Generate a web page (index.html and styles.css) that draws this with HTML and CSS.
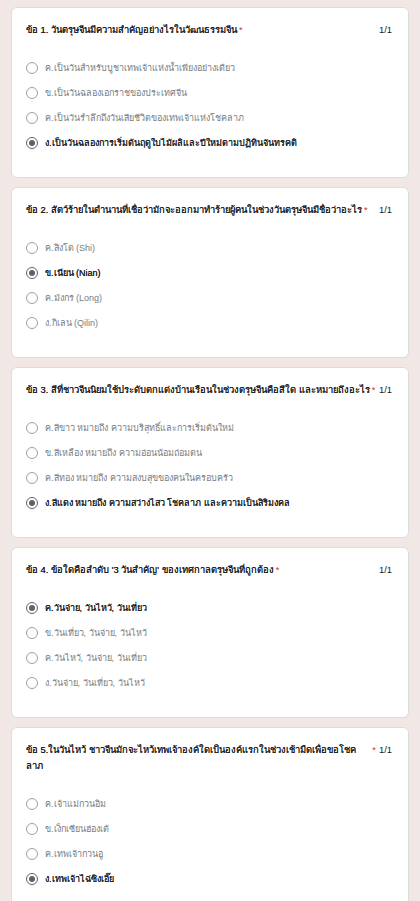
FILE: index.html
```html
<!DOCTYPE html>
<html lang="th">
<head>
<meta charset="utf-8">
<title>แบบทดสอบตรุษจีน</title>
<link rel="stylesheet" href="styles.css">
</head>
<body>
<main class="form">
  <section class="card">
    <div class="q-head">
      <span class="q-title">ข้อ 1. วันตรุษจีนมีความสำคัญอย่างไรในวัฒนธรรมจีน</span><span class="req">*</span>
      <span class="score">1/1</span>
    </div>
    <ul class="options">
      <li class="opt"><span class="radio"></span><span class="label">ค.เป็นวันสำหรับบูชาเทพเจ้าแห่งน้ำเพียงอย่างเดียว</span></li>
      <li class="opt"><span class="radio"></span><span class="label">ข.เป็นวันฉลองเอกราชของประเทศจีน</span></li>
      <li class="opt"><span class="radio"></span><span class="label">ค.เป็นวันรำลึกถึงวันเสียชีวิตของเทพเจ้าแห่งโชคลาภ</span></li>
      <li class="opt selected"><span class="radio"></span><span class="label">ง.เป็นวันฉลองการเริ่มต้นฤดูใบไม้ผลิและปีใหม่ตามปฏิทินจันทรคติ</span></li>
    </ul>
  </section>

  <section class="card">
    <div class="q-head">
      <span class="q-title">ข้อ 2. สัตว์ร้ายในตำนานที่เชื่อว่ามักจะออกมาทำร้ายผู้คนในช่วงวันตรุษจีนมีชื่อว่าอะไร</span><span class="req">*</span>
      <span class="score">1/1</span>
    </div>
    <ul class="options">
      <li class="opt"><span class="radio"></span><span class="label">ค.สิงโต (Shi)</span></li>
      <li class="opt selected"><span class="radio"></span><span class="label">ข.เนียน (Nian)</span></li>
      <li class="opt"><span class="radio"></span><span class="label">ค.มังกร (Long)</span></li>
      <li class="opt"><span class="radio"></span><span class="label">ง.กิเลน (Qilin)</span></li>
    </ul>
  </section>

  <section class="card">
    <div class="q-head">
      <span class="q-title">ข้อ 3. สีที่ชาวจีนนิยมใช้ประดับตกแต่งบ้านเรือนในช่วงตรุษจีนคือสีใด และหมายถึงอะไร</span><span class="req">*</span>
      <span class="score">1/1</span>
    </div>
    <ul class="options">
      <li class="opt"><span class="radio"></span><span class="label">ค.สีขาว หมายถึง ความบริสุทธิ์และการเริ่มต้นใหม่</span></li>
      <li class="opt"><span class="radio"></span><span class="label">ข.สีเหลือง หมายถึง ความอ่อนน้อมถ่อมตน</span></li>
      <li class="opt"><span class="radio"></span><span class="label">ค.สีทอง หมายถึง ความสงบสุขของคนในครอบครัว</span></li>
      <li class="opt selected"><span class="radio"></span><span class="label">ง.สีแดง หมายถึง ความสว่างไสว โชคลาภ และความเป็นสิริมงคล</span></li>
    </ul>
  </section>

  <section class="card">
    <div class="q-head">
      <span class="q-title">ข้อ 4. ข้อใดคือลำดับ '3 วันสำคัญ' ของเทศกาลตรุษจีนที่ถูกต้อง</span><span class="req">*</span>
      <span class="score">1/1</span>
    </div>
    <ul class="options">
      <li class="opt selected"><span class="radio"></span><span class="label">ค.วันจ่าย, วันไหว้, วันเที่ยว</span></li>
      <li class="opt"><span class="radio"></span><span class="label">ข.วันเที่ยว, วันจ่าย, วันไหว้</span></li>
      <li class="opt"><span class="radio"></span><span class="label">ค.วันไหว้, วันจ่าย, วันเที่ยว</span></li>
      <li class="opt"><span class="radio"></span><span class="label">ง.วันจ่าย, วันเที่ยว, วันไหว้</span></li>
    </ul>
  </section>

  <section class="card">
    <div class="q-head">
      <span class="q-title">ข้อ 5.ในวันไหว้ ชาวจีนมักจะไหว้เทพเจ้าองค์ใดเป็นองค์แรกในช่วงเช้ามืดเพื่อขอโชคลาภ</span><span class="req">*</span>
      <span class="score">1/1</span>
    </div>
    <ul class="options">
      <li class="opt"><span class="radio"></span><span class="label">ค.เจ้าแม่กวนอิม</span></li>
      <li class="opt"><span class="radio"></span><span class="label">ข.เง็กเซียนฮ่องเต้</span></li>
      <li class="opt"><span class="radio"></span><span class="label">ค.เทพเจ้ากวนอู</span></li>
      <li class="opt selected"><span class="radio"></span><span class="label">ง.เทพเจ้าไฉ่ซิงเอี๊ย</span></li>
    </ul>
  </section>
</main>
</body>
</html>
```

FILE: styles.css
```css
* { box-sizing: border-box; }

html, body {
  margin: 0;
  padding: 0;
  background: #f1e8e6;
}

body {
  font-family: "Liberation Sans", Arial, "Noto Sans", sans-serif;
  color: #202124;
}

.form {
  display: flex;
  flex-direction: column;
  gap: 9.5px;
  padding: 7px 11px 0 11px;
}

.card {
  background: #ffffff;
  border: 1px solid #dadce0;
  border-radius: 6px;
  padding: 14px 16px 21px 14px;
}

.q-head {
  display: flex;
  align-items: flex-start;
  font-size: 9.4px;
  line-height: 16px;
  color: #202124;
}

.q-title {
  font-weight: 500;
  text-shadow: 0 0 0.3px #202124;
}

.req {
  color: #d93025;
  margin-left: 2px;
}

.score {
  margin-left: auto;
  white-space: nowrap;
  padding-left: 3px;
}

.options {
  list-style: none;
  margin: 17.5px 0 0 0;
  padding: 0;
}

.opt {
  display: flex;
  align-items: center;
  height: 25px;
  font-size: 9px;
  color: #7a7d80;
}

.radio {
  flex: none;
  width: 12px;
  height: 12px;
  border: 1.4px solid #9aa0a6;
  border-radius: 50%;
  margin-right: 7px;
  display: flex;
  align-items: center;
  justify-content: center;
}

.opt.selected {
  color: #202124;
}

.opt.selected .label {
  text-shadow: 0 0 0.3px #202124;
}

.opt.selected .radio {
  border-color: #5f6368;
}

.opt.selected .radio::after {
  content: "";
  width: 6px;
  height: 6px;
  border-radius: 50%;
  background: #5f6368;
}
```
